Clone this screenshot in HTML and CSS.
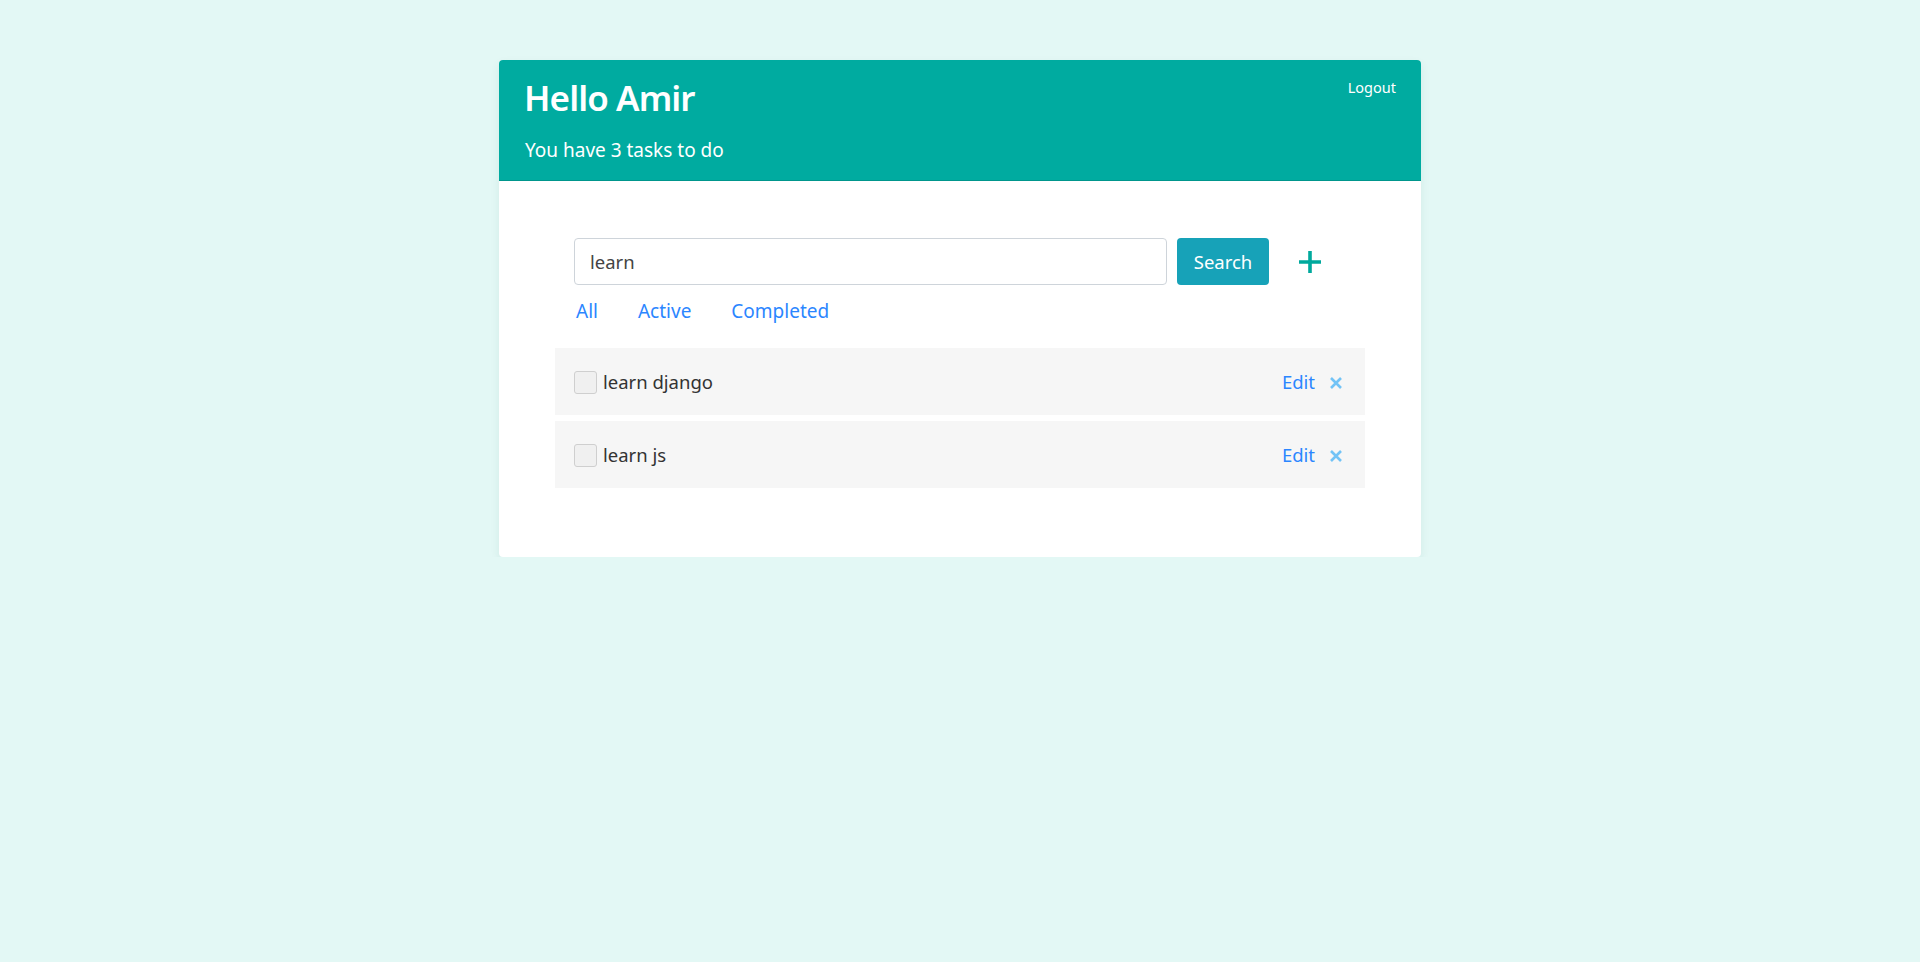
FILE: index.html
```html
<!DOCTYPE html>
<html lang="en">
<head>
<meta charset="utf-8">
<title>Todo</title>
<link rel="stylesheet" href="styles.css">
</head>
<body>
<div class="card">
  <header class="header">
    <div class="greet">
      <h1 class="title">Hello Amir</h1>
      <p class="subtitle">You have 3 tasks to do</p>
    </div>
    <a class="logout" href="#">Logout</a>
  </header>
  <main class="content">
    <div class="search-row">
      <input class="search-input" type="text" value="learn">
      <button class="search-btn">Search</button>
      <span class="add-btn" aria-label="Add">
        <svg width="24" height="24" viewBox="0 0 24 24"><path d="M12 1v22M1 12h22" stroke="#00a99d" stroke-width="3.6" fill="none"/></svg>
      </span>
    </div>
    <nav class="filters">
      <a href="#" class="filter">All</a>
      <a href="#" class="filter">Active</a>
      <a href="#" class="filter">Completed</a>
    </nav>
    <ul class="tasks">
      <li class="task">
        <span class="check"></span>
        <span class="task-text">learn django</span>
        <a href="#" class="edit">Edit</a>
        <span class="remove" aria-label="Delete"><svg width="14" height="14" viewBox="0 0 14 14"><path d="M2 2l10 10M12 2L2 12" stroke="#72c3f6" stroke-width="2.6" fill="none"/></svg></span>
      </li>
      <li class="task">
        <span class="check"></span>
        <span class="task-text">learn js</span>
        <a href="#" class="edit">Edit</a>
        <span class="remove" aria-label="Delete"><svg width="14" height="14" viewBox="0 0 14 14"><path d="M2 2l10 10M12 2L2 12" stroke="#72c3f6" stroke-width="2.6" fill="none"/></svg></span>
      </li>
    </ul>
  </main>
</div>
</body>
</html>
```
FILE: styles.css
```css
* { box-sizing: border-box; }
body {
  margin: 0;
  background: #e3f8f5;
  font-family: "Noto Sans", "Open Sans", sans-serif;
  color: #333;
}
.card {
  width: 922px;
  margin: 60px auto 0;
  background: #fff;
  border-radius: 4px;
  box-shadow: 0 4px 10px rgba(0, 90, 80, 0.08);
  overflow: hidden;
}
.header {
  height: 121px;
  background: #00aba0;
  border-bottom: 1px solid #00968c;
  display: flex;
  justify-content: space-between;
  align-items: flex-start;
  padding: 0 25px 0 25px;
  color: #fff;
}
.title {
  margin: 13px 0 0;
  font-size: 35px;
  font-weight: 600;
  line-height: 1.4;
  letter-spacing: -0.9px;
}
.subtitle {
  margin: 17px 0 0 1px;
  font-size: 19px;
  line-height: 1.2;
}
.logout {
  margin-top: 17px;
  color: #fff;
  text-decoration: none;
  font-size: 14.5px;
  line-height: 1.5;
}
.content {
  padding: 57px 56px 69px;
}
.search-row {
  display: flex;
  align-items: center;
  padding-left: 19px;
}
.search-input {
  width: 593px;
  height: 47px;
  border: 1px solid #ced4da;
  border-radius: 4px;
  padding: 0 15px;
  font-family: inherit;
  font-size: 18.5px;
  color: #444;
}
.search-btn {
  margin-left: 10px;
  width: 92px;
  height: 47px;
  border: none;
  border-radius: 4px;
  background: #17a2b8;
  color: #fff;
  font-family: inherit;
  font-size: 18.5px;
}
.add-btn {
  margin-left: 29px;
  display: flex;
}
.filters {
  display: flex;
  padding-left: 21px;
  margin-top: 6px;
  height: 40px;
  align-items: center;
}
.filter {
  color: #2b86ff;
  text-decoration: none;
  font-size: 19px;
  margin-right: 40px;
}
.tasks {
  list-style: none;
  margin: 17px 0 0;
  padding: 0;
  display: flex;
  flex-direction: column;
  gap: 6px;
}
.task {
  height: 67px;
  background: #f6f6f6;
  display: flex;
  align-items: center;
  padding: 0 22px 0 19px;
  font-size: 18.5px;
}
.check {
  width: 23px;
  height: 23px;
  border: 1px solid #cfcfcf;
  border-radius: 3px;
  background: #f0f0f0;
  margin-right: 6px;
  margin-top: 2px;
}
.task-text {
  flex: 1;
  color: #333;
}
.edit {
  color: #2b86ff;
  text-decoration: none;
  margin-right: 2px;
}
.remove {
  margin-left: 12px;
  display: flex;
  margin-top: 3px;
}
```
